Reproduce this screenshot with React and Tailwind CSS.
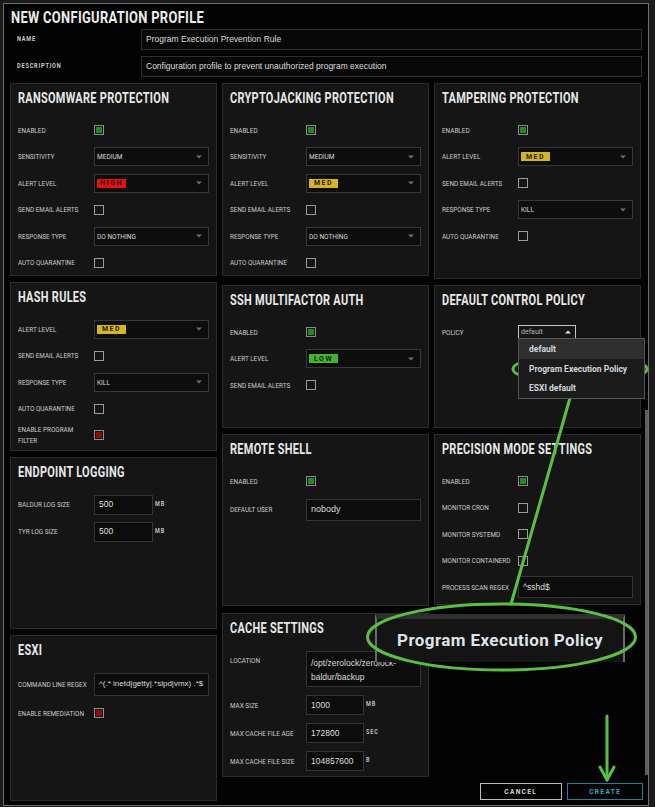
import React from "react";

// no condensed face is installed, so Roboto is narrowed with scale-x
const LABEL = "block origin-left scale-x-[0.85] whitespace-nowrap font-['Roboto',sans-serif] text-[7.5px] leading-[9px] text-[#cbcbcb] uppercase";
const TITLE = "block origin-left scale-x-[0.73] whitespace-nowrap font-['Roboto',sans-serif] font-bold text-[15px] leading-[16px] tracking-[0.4px] text-[#e8e8e8] uppercase";
const INPUT_TEXT = "font-['Liberation_Sans',sans-serif] text-[#dcdcdc] whitespace-nowrap overflow-hidden";
const UNIT = "block origin-left scale-x-[0.85] font-['Roboto',sans-serif] font-bold text-[6.5px] tracking-[1px] text-[#bdbdbd] ml-[2px]";

function Panel({ title, h, children }) {
    return (
        <div className={`${h} shrink-0 bg-[#151515] border border-[#2b2b2b] px-[7px] pt-[6px]`}>
            <h2 className={TITLE}>{title}</h2>
            {children}
        </div>
    );
}

function Row({ label, h = "h-[26.5px]", children }) {
    return (
        <div className={`${h} flex items-center`}>
            <div className="w-[76px] shrink-0">
                <span className={LABEL}>{label}</span>
            </div>
            {children}
        </div>
    );
}

function Check({ state }) {
    if (state === "on") {
        return (
            <span className="w-[10px] h-[10px] border border-[#8c8c8c] p-[1px] flex">
                <span className="flex-1 bg-[#1f8c1f]" />
            </span>
        );
    }
    if (state === "red") {
        return (
            <span className="w-[10px] h-[10px] border border-[#8c8c8c] p-[1px] flex">
                <span className="flex-1 bg-[#8e0b0b]" />
            </span>
        );
    }
    return <span className="w-[10px] h-[10px] border border-[#9a9a9a]" />;
}

function Arrow() {
    return (
        <svg width="6" height="4" viewBox="0 0 6 4">
            <path d="M0 0.5 L6 0.5 L3 3.5 Z" fill="#6e6e6e" />
        </svg>
    );
}

function Select({ children }) {
    return (
        <div className="flex-1 h-[19px] border border-[#383838] bg-[#0d0d0d] flex items-center justify-between pl-[2px] pr-[6px]">
            {children}
            <Arrow />
        </div>
    );
}

function SelText({ children }) {
    return (
        <span className="block origin-left scale-x-[0.87] whitespace-nowrap font-['Roboto',sans-serif] text-[7.5px] text-[#dadada]">
            {children}
        </span>
    );
}

function Badge({ level }) {
    const map = {
        HIGH: "bg-[#e3120f] text-[#2a0000]",
        MED: "bg-[#d6b526] text-[#231c00]",
        LOW: "bg-[#44b32e] text-[#0c2406]",
    };
    return (
        <span className={`${map[level]} w-[29px] h-[9px] flex items-center justify-center font-['Roboto',sans-serif] font-bold text-[7px] tracking-[1.5px]`}>
            {level}
        </span>
    );
}

function TextBox({ w = "flex-1", h = "h-[20px]", size = "text-[8.5px]", children }) {
    return (
        <div className={`${w} ${h} border border-[#343434] bg-[#0c0c0c] flex items-center px-[4px] ${size} ${INPUT_TEXT}`}>
            {children}
        </div>
    );
}

function FieldLabel({ children }) {
    return (
        <div className="w-[131px] shrink-0 pl-[7px]">
            <span className="block origin-left scale-x-[0.85] font-['Roboto',sans-serif] font-bold text-[6.5px] tracking-[1px] text-[#cfcfcf]">
                {children}
            </span>
        </div>
    );
}

export default function App() {
    return (
        <div className="relative w-[655px] h-[807px] bg-[#1b1b1b] pt-[3px] pl-[3px] overflow-hidden">
            <div className="w-[646px] h-[803px] border border-[#6e6e6e] bg-[#030303] px-[6px]">
                <div className="h-[25px] pt-[4px] pl-[1px]">
                    <h1 className="block origin-left scale-x-[0.76] whitespace-nowrap font-['Roboto',sans-serif] font-bold text-[17px] leading-[19px] tracking-[0.4px] text-[#ececec]">
                        NEW CONFIGURATION PROFILE
                    </h1>
                </div>

                <div className="h-[21px] flex items-center">
                    <FieldLabel>NAME</FieldLabel>
                    <div className={`flex-1 h-full border border-[#2e2e2e] bg-[#080808] flex items-center px-[4px] text-[8.5px] ${INPUT_TEXT}`}>
                        Program Execution Prevention Rule
                    </div>
                </div>
                <div className="h-[21px] mt-[6px] flex items-center">
                    <FieldLabel>DESCRIPTION</FieldLabel>
                    <div className={`flex-1 h-full border border-[#2e2e2e] bg-[#080808] flex items-center px-[4px] text-[8.5px] ${INPUT_TEXT}`}>
                        Configuration profile to prevent unauthorized program execution
                    </div>
                </div>

                <div className="mt-[6px] flex gap-[5px]">
                    {/* column 1 */}
                    <div className="w-[207px] flex flex-col gap-[6px]">
                        <Panel title="Ransomware Protection" h="h-[193px]">
                            <div className="mt-[11px]">
                                <Row label="Enabled"><Check state="on" /></Row>
                                <Row label="Sensitivity"><Select><SelText>MEDIUM</SelText></Select></Row>
                                <Row label="Alert Level"><Select><Badge level="HIGH" /></Select></Row>
                                <Row label="Send Email Alerts"><Check /></Row>
                                <Row label="Response Type"><Select><SelText>DO NOTHING</SelText></Select></Row>
                                <Row label="Auto Quarantine"><Check /></Row>
                            </div>
                        </Panel>
                        <Panel title="Hash Rules" h="h-[169px]">
                            <div className="mt-[11px]">
                                <Row label="Alert Level"><Select><Badge level="MED" /></Select></Row>
                                <Row label="Send Email Alerts"><Check /></Row>
                                <Row label="Response Type"><Select><SelText>KILL</SelText></Select></Row>
                                <Row label="Auto Quarantine"><Check /></Row>
                                <div className="h-[26.5px] flex items-center">
                                    <div className="w-[76px] shrink-0">
                                        <span className="block origin-left scale-x-[0.85] whitespace-nowrap font-['Roboto',sans-serif] text-[7.5px] leading-[11px] text-[#cbcbcb]">
                                            ENABLE PROGRAM<br />FILTER
                                        </span>
                                    </div>
                                    <Check state="red" />
                                </div>
                            </div>
                        </Panel>
                        <Panel title="Endpoint Logging" h="h-[172px]">
                            <div className="mt-[11px]">
                                <Row label="Baldur Log Size" h="h-[27px]">
                                    <TextBox w="w-[59px]">500</TextBox>
                                    <span className={UNIT}>MB</span>
                                </Row>
                                <Row label="Tyr Log Size" h="h-[27px]">
                                    <TextBox w="w-[59px]">500</TextBox>
                                    <span className={UNIT}>MB</span>
                                </Row>
                            </div>
                        </Panel>
                        <Panel title="ESXi" h="h-[166px]">
                            <div className="mt-[11px]">
                                <Row label="Command Line Regex" h="h-[30px]">
                                    <TextBox h="h-[23px]" size="text-[8px]">^(.* inetd|getty|.*slpd|vmx) .*$</TextBox>
                                </Row>
                                <Row label="Enable Remediation" h="h-[28px]"><Check state="red" /></Row>
                            </div>
                        </Panel>
                    </div>

                    {/* columns 2 + 3 */}
                    <div className="flex flex-col">
                        <div className="flex gap-[5px] h-[694px]">
                            <div className="w-[207px] flex flex-col">
                                <Panel title="Cryptojacking Protection" h="h-[193px]">
                                    <div className="mt-[11px]">
                                        <Row label="Enabled"><Check state="on" /></Row>
                                        <Row label="Sensitivity"><Select><SelText>MEDIUM</SelText></Select></Row>
                                        <Row label="Alert Level"><Select><Badge level="MED" /></Select></Row>
                                        <Row label="Send Email Alerts"><Check /></Row>
                                        <Row label="Response Type"><Select><SelText>DO NOTHING</SelText></Select></Row>
                                        <Row label="Auto Quarantine"><Check /></Row>
                                    </div>
                                </Panel>
                                <div className="h-[9px] shrink-0" />
                                <Panel title="SSH Multifactor Auth" h="h-[143px]">
                                    <div className="mt-[11px]">
                                        <Row label="Enabled"><Check state="on" /></Row>
                                        <Row label="Alert Level"><Select><Badge level="LOW" /></Select></Row>
                                        <Row label="Send Email Alerts"><Check /></Row>
                                    </div>
                                </Panel>
                                <div className="h-[6px] shrink-0" />
                                <Panel title="Remote Shell" h="h-[172px]">
                                    <div className="mt-[11px]">
                                        <Row label="Enabled"><Check state="on" /></Row>
                                        <Row label="Default User" h="h-[30px]">
                                            <TextBox h="h-[22px]" size="text-[9px]">nobody</TextBox>
                                        </Row>
                                    </div>
                                </Panel>
                                <div className="h-[7px] shrink-0" />
                                <Panel title="Cache Settings" h="h-[164px]">
                                    <div className="mt-[15px] flex items-start">
                                        <div className="w-[76px] shrink-0 pt-[5px]">
                                            <span className={LABEL}>Location</span>
                                        </div>
                                        <div className="flex-1 h-[36px] border border-[#343434] bg-[#0c0c0c] px-[4px] pt-[4px] leading-[14px] font-['Liberation_Sans',sans-serif] text-[8.5px] text-[#dcdcdc]">
                                            /opt/zerolock/zerolock-<br />baldur/backup
                                        </div>
                                    </div>
                                    <div className="mt-[4px]">
                                        <Row label="Max Size" h="h-[28px]">
                                            <TextBox w="w-[58px]">1000</TextBox>
                                            <span className={UNIT}>MB</span>
                                        </Row>
                                        <Row label="Max Cache File Age" h="h-[28px]">
                                            <TextBox w="w-[58px]">172800</TextBox>
                                            <span className={UNIT}>SEC</span>
                                        </Row>
                                        <Row label="Max Cache File Size" h="h-[28px]">
                                            <TextBox w="w-[58px]">104857600</TextBox>
                                            <span className={UNIT}>B</span>
                                        </Row>
                                    </div>
                                </Panel>
                            </div>

                            <div className="w-[207px] flex flex-col gap-[6px]">
                                <Panel title="Tampering Protection" h="h-[196px]">
                                    <div className="mt-[11px]">
                                        <Row label="Enabled"><Check state="on" /></Row>
                                        <Row label="Alert Level"><Select><Badge level="MED" /></Select></Row>
                                        <Row label="Send Email Alerts"><Check /></Row>
                                        <Row label="Response Type"><Select><SelText>KILL</SelText></Select></Row>
                                        <Row label="Auto Quarantine"><Check /></Row>
                                    </div>
                                </Panel>
                                <Panel title="Default Control Policy" h="h-[143px]">
                                    <div className="mt-[11px]">
                                        <Row label="Policy">
                                            <div className="relative w-[58px] h-[14px] border border-[#c4c4c4] bg-[#161616] flex items-center justify-between pl-[2px] pr-[4px]">
                                                <span className="font-['Roboto',sans-serif] text-[7px] text-[#b5b5b5]">default</span>
                                                <svg width="6" height="4" viewBox="0 0 6 4">
                                                    <path d="M0 3.5 L6 3.5 L3 0.5 Z" fill="#e6e6e6" />
                                                </svg>
                                                <div className="absolute left-[-1px] top-[12px] w-[127px] h-[61px] border border-[#555] bg-[#1b1b1b] z-10 font-['Roboto',sans-serif] font-bold text-[8.5px] text-[#d3d7dd]">
                                                    <div className="h-[20px] bg-[#2f2f2f] flex items-center pl-[10px]">default</div>
                                                    <div className="h-[20px] flex items-center pl-[10px]">Program Execution Policy</div>
                                                    <div className="h-[19px] flex items-center pl-[10px]">ESXI default</div>
                                                </div>
                                            </div>
                                        </Row>
                                    </div>
                                </Panel>
                                <Panel title="Precision Mode Settings" h="h-[171px]">
                                    <div className="mt-[11px]">
                                        <Row label="Enabled"><Check state="on" /></Row>
                                        <Row label="Monitor Cron"><Check /></Row>
                                        <Row label="Monitor Systemd"><Check /></Row>
                                        <Row label="Monitor Containerd"><Check /></Row>
                                        <Row label="Process Scan Regex">
                                            <TextBox h="h-[22px]">^sshd$</TextBox>
                                        </Row>
                                    </div>
                                </Panel>
                            </div>
                        </div>

                        <div className="mt-[6px] -mr-[2px] flex justify-end gap-[5px]">
                            <button className="w-[82px] h-[17px] border border-[#bcbcbc] flex items-center justify-center">
                                <span className="block scale-x-[0.88] font-['Roboto',sans-serif] font-bold text-[7.5px] tracking-[1.5px] text-[#d6d6d6]">CANCEL</span>
                            </button>
                            <button className="w-[76px] h-[17px] border border-[#2a7a98] flex items-center justify-center">
                                <span className="block scale-x-[0.88] font-['Roboto',sans-serif] font-bold text-[7.5px] tracking-[1.5px] text-[#3fa2c5]">CREATE</span>
                            </button>
                        </div>
                    </div>
                </div>
            </div>

            {/* scrollbar thumb */}
            <div className="absolute left-[645px] top-[410px] w-[3px] h-[365px] bg-[#5e5e5e]" />

            {/* magnified callout */}
            <div className="absolute left-[375px] top-[614px] w-[250px] h-[48px] bg-[#141414] border-x-2 border-x-[#6a6a6a] border-t-[5px] border-t-[#2e2e2e] flex items-center justify-center">
                <span className="font-['Roboto',sans-serif] font-bold text-[17px] tracking-[0.4px] text-[#dfe3ea]">
                    Program Execution Policy
                </span>
            </div>

            {/* green annotations */}
            <svg className="absolute left-0 top-0 pointer-events-none" width="655" height="807" viewBox="0 0 655 807">
                <g fill="none" stroke="#5cbf45" strokeWidth="3" strokeLinecap="round" strokeLinejoin="round">
                    <ellipse cx="580" cy="369" rx="67" ry="14" />
                    <line x1="574" y1="384" x2="511" y2="604" />
                    <ellipse cx="501.5" cy="637" rx="134" ry="33" />
                    <line x1="607" y1="716" x2="607" y2="780" />
                    <polyline points="600,767 607,780 614,767" />
                </g>
            </svg>
        </div>
    );
}
